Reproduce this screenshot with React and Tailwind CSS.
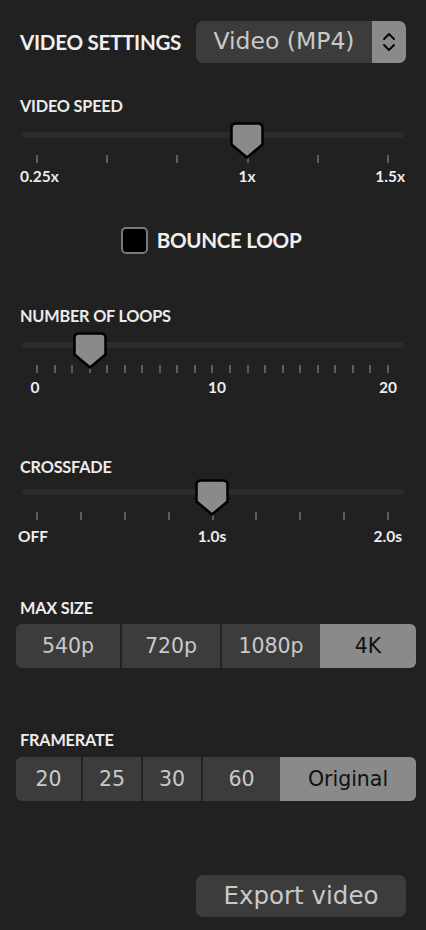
import React from 'react';

const labelFont = { fontFamily: 'Lato, "Noto Sans", sans-serif' };
const bodyFont = { fontFamily: '"DejaVu Sans", sans-serif' };

const SectionLabel = ({ children, className = '' }) => (
  <div className={`text-[16.3px] leading-[20px] font-bold text-[#ececec] tracking-[-0.2px] ${className}`}>
    {children}
  </div>
);

const Thumb = ({ left }) => (
  <svg
    width="34"
    height="37"
    viewBox="0 0 34 37"
    className="absolute top-[-10px]"
    style={{ left: left - 17 }}
  >
    <path
      d="M6 1.5 H28 Q32.5 1.5 32.5 6 V22.5 L17 35.5 L1.5 22.5 V6 Q1.5 1.5 6 1.5 Z"
      fill="#8a8a8a"
      stroke="#000"
      strokeWidth="2.5"
      strokeLinejoin="round"
    />
  </svg>
);

// ticks span x=37..387 on the page (17..367 inside the 20px-padded column)
const Slider = ({ ticks, thumb, labels, labelGap = 'mt-[4px]' }) => {
  const step = 350 / (ticks - 1);
  return (
    <div className="relative">
      <div className="mx-[2px] h-[6px] rounded-full bg-[#2b2b2b]" />
      <div className="mt-[17px] flex justify-between pl-[16px] pr-[17px]">
        {Array.from({ length: ticks }).map((_, i) => (
          <div key={i} className="w-[2px] h-[8px] bg-[#5c5c5c]" />
        ))}
      </div>
      <div className={`relative h-[18px] ${labelGap}`}>
        {labels.map((l) => (
          <span
            key={l.text}
            className="absolute top-0 text-[15.5px] leading-[18px] font-bold text-[#ececec]"
            style={
              l.align === 'left'
                ? { left: l.x - 20 }
                : l.align === 'right'
                ? { right: 406 - l.x }
                : { left: l.x - 20, transform: 'translateX(-50%)' }
            }
          >
            {l.text}
          </span>
        ))}
      </div>
      <Thumb left={17 + step * thumb} />
    </div>
  );
};

const Segmented = ({ items, active }) => (
  <div
    className="ml-[-4px] flex h-[44px] w-[400px] overflow-hidden rounded-[6px] bg-[#3c3c3c]"
    style={bodyFont}
  >
    {items.map((it, i) => (
      <div
        key={it.text}
        className={`flex shrink-0 items-center justify-center text-[20.5px] ${
          i > 0 && i !== active ? 'border-l-2 border-[#222]' : ''
        } ${i === active ? 'bg-[#8a8a8a] text-[#111]' : 'text-[#c9c9c9]'}`}
        style={{ width: it.w }}
      >
        {it.text}
      </div>
    ))}
  </div>
);

const App = () => {
  return (
    <div className="w-[426px] h-[930px] bg-[#212121] px-[20px] pt-[21px]" style={labelFont}>
      {/* Header */}
      <div className="flex h-[42px] items-center justify-between">
        <div className="text-[20.6px] font-bold text-[#efefef] tracking-[-0.3px]">VIDEO SETTINGS</div>
        <div className="flex h-[42px] w-[210px] overflow-hidden rounded-[7px] bg-[#3c3c3c]">
          <div
            className="flex flex-1 items-center justify-center text-[23.5px] text-[#c9c9c9]"
            style={bodyFont}
          >
            Video (MP4)
          </div>
          <div className="flex w-[34px] items-center justify-center bg-[#8a8a8a]">
            <svg width="14" height="22" viewBox="0 0 14 22" fill="none" stroke="#000" strokeWidth="1.8" strokeLinecap="round" strokeLinejoin="round">
              <path d="M2 8 L7 3 L12 8" />
              <path d="M2 14 L7 19 L12 14" />
            </svg>
          </div>
        </div>
      </div>

      {/* Video speed */}
      <SectionLabel className="mt-[33px]">VIDEO SPEED</SectionLabel>
      <div className="mt-[16px]">
        <Slider
          ticks={6}
          thumb={3}
          labels={[
            { text: '0.25x', x: 20, align: 'left' },
            { text: '1x', x: 247 },
            { text: '1.5x', x: 405, align: 'right' },
          ]}
        />
      </div>

      {/* Bounce loop */}
      <div className="mt-[40px] flex items-center justify-center gap-[9px] pr-[4px]">
        <div className="h-[27px] w-[27px] rounded-[5px] border-2 border-[#7a7a7a] bg-black" />
        <div className="text-[20.6px] font-bold text-[#efefef] tracking-[-0.3px]">BOUNCE LOOP</div>
      </div>

      {/* Number of loops */}
      <SectionLabel className="mt-[50px]">NUMBER OF LOOPS</SectionLabel>
      <div className="mt-[16px]">
        <Slider
          ticks={21}
          thumb={3}
          labelGap="mt-[5px]"
          labels={[
            { text: '0', x: 35 },
            { text: '10', x: 217 },
            { text: '20', x: 388 },
          ]}
        />
      </div>

      {/* Crossfade */}
      <SectionLabel className="mt-[61px]">CROSSFADE</SectionLabel>
      <div className="mt-[12px]">
        <Slider
          ticks={9}
          thumb={4}
          labelGap="mt-[7px]"
          labels={[
            { text: 'OFF', x: 18, align: 'left' },
            { text: '1.0s', x: 212 },
            { text: '2.0s', x: 402, align: 'right' },
          ]}
        />
      </div>

      {/* Max size */}
      <SectionLabel className="mt-[53px]">MAX SIZE</SectionLabel>
      <div className="mt-[6px]">
        <Segmented
          active={3}
          items={[
            { text: '540p', w: 104 },
            { text: '720p', w: 100 },
            { text: '1080p', w: 100 },
            { text: '4K', w: 96 },
          ]}
        />
      </div>

      {/* Framerate */}
      <SectionLabel className="mt-[62px]">FRAMERATE</SectionLabel>
      <div className="mt-[7px]">
        <Segmented
          active={4}
          items={[
            { text: '20', w: 65 },
            { text: '25', w: 60 },
            { text: '30', w: 60 },
            { text: '60', w: 79 },
            { text: 'Original', w: 136 },
          ]}
        />
      </div>

      {/* Export */}
      <div className="mt-[74px] flex justify-end">
        <button
          className="h-[42px] w-[210px] rounded-[7px] bg-[#3c3c3c] text-[24.5px] text-[#c9c9c9]"
          style={bodyFont}
        >
          Export video
        </button>
      </div>
    </div>
  );
};

export default App;
